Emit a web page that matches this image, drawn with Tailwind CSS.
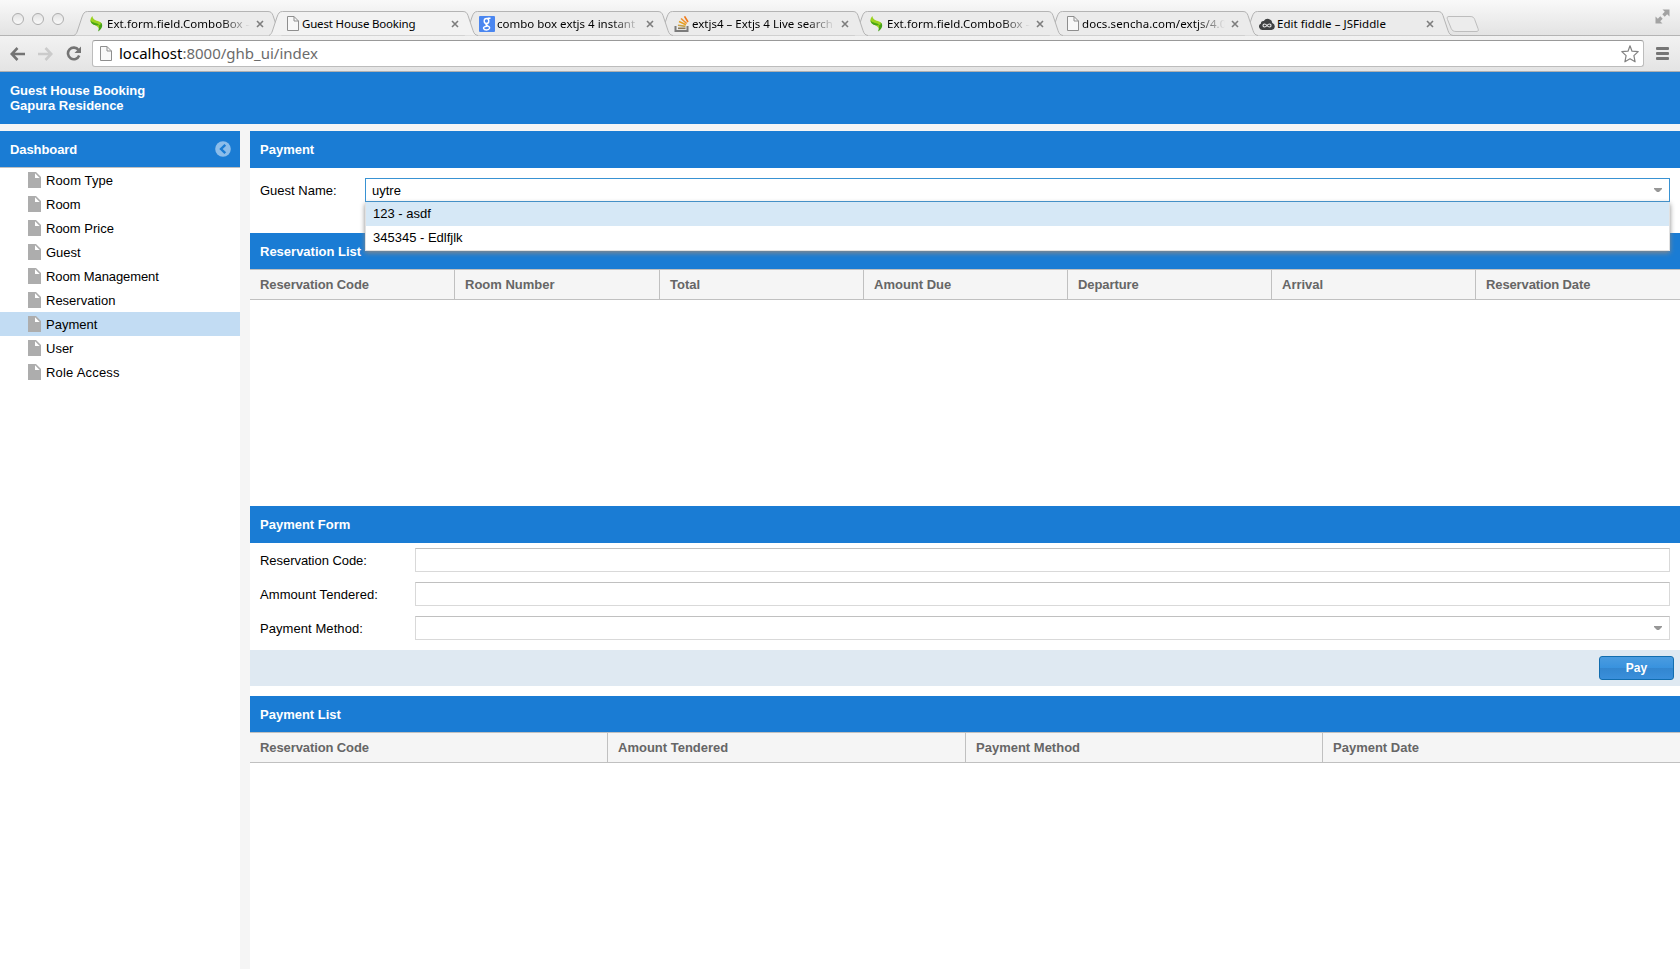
<!DOCTYPE html>
<html lang="en">
<head>
  <meta charset="UTF-8">
  <title>Guest House Booking</title>
  <script src="https://cdn.jsdelivr.net/npm/@tailwindcss/browser@4"></script>
</head>
<body class="h-screen overflow-hidden flex flex-col bg-[#f5f5f5] text-black font-['Liberation_Sans',Arial,sans-serif] text-[13px]">

  <!-- shared shapes -->
  <svg class="hidden">
    <symbol id="tab" viewBox="0 0 209 25">
      <path d="M0 24.5C2 23.5 2.6 22 3.4 20L8 6C9.3 2.5 10.3 .5 13.5 .5H194C197 .5 198 2 199 4.500L204 19.500C205 22.500 206 24 209 24.500" stroke="#b4b4b4"/>
    </symbol>
    <symbol id="doc" viewBox="0 0 12 15">
      <path d="M.5 .5H7L11.500 5V14.500H.5Z" fill="#f8f8f8" stroke="#8e8e8e"/>
      <path d="M7 .5V5H11.500" fill="none" stroke="#8e8e8e"/>
    </symbol>
    <symbol id="sencha" viewBox="0 0 16 16">
      <path d="M2.500 0C-.5 3 0 6.500 2.500 8C5.500 9.600 8 10 9 13C13.500 9 12 6.500 9 5.500C6 4.500 2.500 3.500 2.500 0Z" fill="#9bd31f"/>
      <path d="M.5 4C1.500 6.500 4 6.500 7 7.500C10 8.500 9.500 11 8 15.500C12.500 12.500 13.500 8.500 10.500 6.200C11.500 9.500 9 9.500 6 9.300C2.500 8.800 .5 7 .5 4Z" fill="#46a317"/>
    </symbol>
    <symbol id="x" viewBox="0 0 8 8">
      <path d="M1 1L7 7M7 1L1 7" stroke="#7d7d7d" stroke-width="1.600"/>
    </symbol>
    <symbol id="fiddle" viewBox="0 0 16 12">
      <path d="M3.500 12A3.400 3.400 0 0 1 2 5.500A2.200 2.200 0 0 1 4.800 3A4.600 4.600 0 0 1 13.300 5A3.600 3.600 0 0 1 12.500 12Z" fill="#3f4142"/>
      <path d="M8 7.500C6.500 5.500 4 5.500 4 7.500S6.500 9.500 8 7.500S12 5.500 12 7.500S9.500 9.500 8 7.500Z" fill="none" stroke="#eee" stroke-width="1.100"/>
    </symbol>
    <symbol id="leaf" viewBox="0 0 13 16">
      <path d="M0 0H8L13 5V16H0Z" fill="#adadad"/>
      <path d="M7 1.300V6H11.700Z" fill="#fff"/>
    </symbol>
    <symbol id="caret" viewBox="0 0 8 4">
      <path d="M0 0H8V1L5 4H3L0 1Z" fill="#979797"/>
    </symbol>
  </svg>

  <!-- tab strip -->
  <div class="relative h-9 shrink-0 flex items-end bg-linear-to-b from-[#f9f9f9] to-[#e3e3e3] border-b border-[#b4b4b4] font-['Noto_Sans',sans-serif] text-[11.5px]">
    <div class="w-[74px] h-full flex items-center gap-2 pl-3 pt-[3px]">
      <span class="size-3 rounded-full border border-[#adadad] bg-linear-to-b from-[#e3e3e3] to-[#fafafa]"></span>
      <span class="size-3 rounded-full border border-[#adadad] bg-linear-to-b from-[#e3e3e3] to-[#fafafa]"></span>
      <span class="size-3 rounded-full border border-[#adadad] bg-linear-to-b from-[#e3e3e3] to-[#fafafa]"></span>
    </div>
    <div class="relative z-10 w-[209px] h-[25px] -mr-[14px] -mb-px shrink-0">
      <svg class="absolute inset-0 w-[209px] h-[25px] fill-[#ebebeb]"><use href="#tab"/></svg>
      <div class="relative h-full flex items-center pl-4">
        <svg class="size-4 mr-px shrink-0"><use href="#sencha"/></svg>
        <span class="w-[143px] whitespace-nowrap mask-r-from-80% tracking-[0.05px]">Ext.form.field.ComboBox –</span>
        <svg class="size-2 ml-[6px] shrink-0"><use href="#x"/></svg>
      </div>
    </div>
    <div class="relative z-20 w-[209px] h-[25px] -mr-[14px] -mb-px shrink-0">
      <svg class="absolute inset-0 w-[209px] h-[25px] fill-[#f2f2f2]"><use href="#tab"/></svg>
      <div class="relative h-full flex items-center pl-[18px]">
        <svg class="w-[12px] h-[15px] mr-[3px] shrink-0"><use href="#doc"/></svg>
        <span class="w-[143px] whitespace-nowrap tracking-[-0.18px]">Guest House Booking</span>
        <svg class="size-2 ml-[6px] shrink-0"><use href="#x"/></svg>
      </div>
    </div>
    <div class="relative z-9 w-[209px] h-[25px] -mr-[14px] -mb-px shrink-0">
      <svg class="absolute inset-0 w-[209px] h-[25px] fill-[#ebebeb]"><use href="#tab"/></svg>
      <div class="relative h-full flex items-center pl-[15px]">
        <svg class="size-4 mr-[2px] shrink-0" viewBox="0 0 16 16">
          <rect width="16" height="16" rx="1" fill="#4a86f0"/>
          <g fill="none" stroke="#fff" stroke-width="1.400">
            <ellipse cx="7.500" cy="5" rx="2.300" ry="2.500"/>
            <path d="M8.500 2.200H11.500M8.500 7.500C6 8.300 7 9 8.800 9.800C11.800 11 10.800 14 7.500 14S3.600 11.300 6 10.600S8 10 9 10"/>
          </g>
        </svg>
        <span class="w-[143px] whitespace-nowrap mask-r-from-80%">combo box extjs 4 instant</span>
        <svg class="size-2 ml-[6px] shrink-0"><use href="#x"/></svg>
      </div>
    </div>
    <div class="relative z-8 w-[209px] h-[25px] -mr-[14px] -mb-px shrink-0">
      <svg class="absolute inset-0 w-[209px] h-[25px] fill-[#ebebeb]"><use href="#tab"/></svg>
      <div class="relative h-full flex items-center pl-[15px]">
        <svg class="size-4 mr-[2px] shrink-0" viewBox="0 0 16 16" fill="none">
          <path d="M1.500 10V15H13.500V10" stroke="#7b7b7b" stroke-width="2"/>
          <path d="M4 12.300H11.500" stroke="#8a7a5a" stroke-width="1.600"/>
          <path d="M4 9.200L11.500 10.400" stroke="#c8a24b" stroke-width="1.600"/>
          <path d="M5 5.500L12 8.800" stroke="#e8a020" stroke-width="1.600"/>
          <path d="M7 2.500L12.700 7.500" stroke="#f0902a" stroke-width="1.600"/>
          <path d="M10.500 .3L14 6" stroke="#f07a1a" stroke-width="1.600"/>
        </svg>
        <span class="w-[143px] whitespace-nowrap mask-r-from-80%">extjs4 – Extjs 4 Live search</span>
        <svg class="size-2 ml-[6px] shrink-0"><use href="#x"/></svg>
      </div>
    </div>
    <div class="relative z-7 w-[209px] h-[25px] -mr-[14px] -mb-px shrink-0">
      <svg class="absolute inset-0 w-[209px] h-[25px] fill-[#ebebeb]"><use href="#tab"/></svg>
      <div class="relative h-full flex items-center pl-4">
        <svg class="size-4 mr-px shrink-0"><use href="#sencha"/></svg>
        <span class="w-[143px] whitespace-nowrap mask-r-from-80% tracking-[0.05px]">Ext.form.field.ComboBox –</span>
        <svg class="size-2 ml-[6px] shrink-0"><use href="#x"/></svg>
      </div>
    </div>
    <div class="relative z-6 w-[209px] h-[25px] -mr-[14px] -mb-px shrink-0">
      <svg class="absolute inset-0 w-[209px] h-[25px] fill-[#ebebeb]"><use href="#tab"/></svg>
      <div class="relative h-full flex items-center pl-[18px]">
        <svg class="w-[12px] h-[15px] mr-[3px] shrink-0"><use href="#doc"/></svg>
        <span class="w-[143px] whitespace-nowrap mask-r-from-80% tracking-[0.08px]">docs.sencha.com/extjs/4.0</span>
        <svg class="size-2 ml-[6px] shrink-0"><use href="#x"/></svg>
      </div>
    </div>
    <div class="relative z-5 w-[209px] h-[25px] -mr-[14px] -mb-px shrink-0">
      <svg class="absolute inset-0 w-[209px] h-[25px] fill-[#ebebeb]"><use href="#tab"/></svg>
      <div class="relative h-full flex items-center pl-[15px]">
        <svg class="w-4 h-3 mr-[2px] shrink-0"><use href="#fiddle"/></svg>
        <span class="w-[143px] whitespace-nowrap tracking-[0.05px]">Edit fiddle – JSFiddle</span>
        <svg class="size-2 ml-[6px] shrink-0"><use href="#x"/></svg>
      </div>
    </div>
    <svg class="w-[34px] h-[17px] ml-[7px] mb-[2px] shrink-0" viewBox="0 0 34 17">
      <path d="M3 .5H24C27 .5 28 1.500 28.700 3.500L32 12.500C32.700 14.500 32.500 15.500 30 15.500H10C7.500 15.500 6 14.500 5.200 12.500L1.500 3.500C.8 1.500 1 .5 3 .5Z" fill="#ececec" stroke="#bdbdbd"/>
    </svg>
    <svg class="size-[15px] ml-auto mr-[10px] mb-[11px] shrink-0" viewBox="0 0 15 15" fill="#a3a3a3">
      <path d="M7.500 .5H14.500V7.500L12.200 5.200L9.700 7.700L7.300 5.300L9.800 2.800Z"/>
      <path d="M.5 7.500L2.800 9.800L5.300 7.300L7.700 9.700L5.200 12.200L7.500 14.500H.5Z"/>
    </svg>
  </div>

  <!-- toolbar -->
  <div class="h-9 shrink-0 flex items-center bg-linear-to-b from-[#f2f2f2] to-[#e4e4e4] border-b border-[#b0b0b0] pl-[10px] pr-[11px]">
    <svg class="w-[15px] h-[14px] shrink-0" viewBox="0 0 15 14" fill="none" stroke="#747474" stroke-width="2.600">
      <path d="M15 7H2M7.500 1L1.700 7L7.500 13"/>
    </svg>
    <svg class="w-[15px] h-[14px] ml-[13px] shrink-0" viewBox="0 0 15 14" fill="none" stroke="#cbcbcb" stroke-width="2.600">
      <path d="M0 7H13M7.500 1L13.300 7L7.500 13"/>
    </svg>
    <svg class="size-[15px] ml-[13px] shrink-0" viewBox="0 0 15 15">
      <path d="M12.500 4A5.800 5.800 0 1 0 13.200 9.500" fill="none" stroke="#747474" stroke-width="2.600"/>
      <path d="M15 .5V7H8.500Z" fill="#747474"/>
    </svg>
    <div class="w-[1552px] h-[27px] ml-[11px] flex items-center rounded-[3px] bg-white border border-[#bcbcbc] border-t-[#999] pl-[7px] pr-1">
      <svg class="w-[12px] h-[15px] shrink-0"><use href="#doc"/></svg>
      <span class="ml-[7px] pb-[2px] font-['Noto_Sans',sans-serif] text-[15px] leading-5 text-[#6b6b6b]"><span class="text-black">localhost</span>:8000/ghb_ui/index</span>
      <svg class="size-[18px] ml-auto" viewBox="0 0 18 18">
        <path d="M9 .8L11 6.200L17.200 6.600L12.900 10.600L14.100 16.800L9 13.800L3.900 16.800L5.100 10.600L.8 6.600L7 6.200Z" fill="#fff" stroke="#828282" stroke-width="1.200" stroke-linejoin="round"/>
      </svg>
    </div>
    <div class="ml-auto w-[13px] flex flex-col gap-[2px]">
      <span class="h-[3px] rounded-[1px] bg-[#757575]"></span>
      <span class="h-[3px] rounded-[1px] bg-[#757575]"></span>
      <span class="h-[3px] rounded-[1px] bg-[#757575]"></span>
    </div>
  </div>

  <!-- app header -->
  <header class="h-[52px] shrink-0 bg-[#1a7cd4] text-white font-bold leading-[15px] px-[10px] pt-[11px] tracking-[-0.04px]">
    <div>Guest House Booking</div>
    <div>Gapura Residence</div>
  </header>

  <div class="flex-1 min-h-0 flex gap-[10px] pt-[7px]">

    <!-- sidebar -->
    <aside class="w-60 shrink-0 bg-white">
      <div class="h-[37px] flex items-center justify-between bg-[#1a7cd4] border-b border-[#c0c0c0] text-white font-bold pl-[10px] pr-[9px]">
        <span class="pt-px tracking-[-0.08px]">Dashboard</span>
        <svg class="size-4" viewBox="0 0 16 16">
          <circle cx="8" cy="8" r="7.800" fill="#8cbdea"/>
          <path d="M10.300 3.800L6 8L10.300 12.200" fill="none" stroke="#1a7cd4" stroke-width="2.400"/>
        </svg>
      </div>
      <ul class="leading-[25px]">
        <li class="h-6 flex items-center gap-[5px] pl-7"><svg class="w-[13px] h-4"><use href="#leaf"/></svg><span class="h-6 tracking-[0.1px]">Room Type</span></li>
        <li class="h-6 flex items-center gap-[5px] pl-7"><svg class="w-[13px] h-4"><use href="#leaf"/></svg><span class="h-6">Room</span></li>
        <li class="h-6 flex items-center gap-[5px] pl-7"><svg class="w-[13px] h-4"><use href="#leaf"/></svg><span class="h-6">Room Price</span></li>
        <li class="h-6 flex items-center gap-[5px] pl-7"><svg class="w-[13px] h-4"><use href="#leaf"/></svg><span class="h-6">Guest</span></li>
        <li class="h-6 flex items-center gap-[5px] pl-7"><svg class="w-[13px] h-4"><use href="#leaf"/></svg><span class="h-6 tracking-[-0.1px]">Room Management</span></li>
        <li class="h-6 flex items-center gap-[5px] pl-7"><svg class="w-[13px] h-4"><use href="#leaf"/></svg><span class="h-6">Reservation</span></li>
        <li class="h-6 flex items-center gap-[5px] pl-7 bg-[#c2dcf3]"><svg class="w-[13px] h-4"><use href="#leaf"/></svg><span class="h-6">Payment</span></li>
        <li class="h-6 flex items-center gap-[5px] pl-7"><svg class="w-[13px] h-4"><use href="#leaf"/></svg><span class="h-6">User</span></li>
        <li class="h-6 flex items-center gap-[5px] pl-7"><svg class="w-[13px] h-4"><use href="#leaf"/></svg><span class="h-6 tracking-[0.2px]">Role Access</span></li>
      </ul>
    </aside>

    <!-- content -->
    <main class="flex-1 min-w-0 flex flex-col bg-white">
      <h2 class="h-[37px] shrink-0 flex items-center bg-[#1a7cd4] text-white font-bold px-[10px]">Payment</h2>
      <div class="h-[65px] shrink-0 flex items-start px-[10px] pt-[10px]">
        <label class="w-[105px] leading-[25px]">Guest Name:</label>
        <div class="relative flex-1">
          <div class="h-6 flex items-center justify-between border border-[#3892d3] bg-white pl-[6px] pr-[7px]">
            <span class="pt-px">uytre</span>
            <svg class="w-2 h-1"><use href="#caret"/></svg>
          </div>
          <ul class="absolute left-0 right-0 top-6 z-10 bg-white border-x border-b border-[#e1e1e1] leading-6 shadow-[0_2px_5px_#888]">
            <li class="h-6 px-[7px] bg-[#d6e8f6]">123 - asdf</li>
            <li class="h-6 px-[7px]">345345 - Edlfjlk</li>
          </ul>
        </div>
      </div>

      <h2 class="h-9 shrink-0 flex items-center bg-[#1a7cd4] text-white font-bold px-[10px] pt-px">Reservation List</h2>
      <div class="h-[31px] shrink-0 grid grid-cols-[205px_205px_204px_204px_204px_204px_1fr] items-stretch bg-[#f5f5f5] border-y border-[#c0c0c0] text-[#666] font-bold leading-[29px]">
        <div class="px-[10px] border-r border-[#c0c0c0] tracking-[-0.1px]">Reservation Code</div>
        <div class="px-[10px] border-r border-[#c0c0c0]">Room Number</div>
        <div class="px-[10px] border-r border-[#c0c0c0]">Total</div>
        <div class="px-[10px] border-r border-[#c0c0c0]">Amount Due</div>
        <div class="px-[10px] border-r border-[#c0c0c0] tracking-[-0.08px]">Departure</div>
        <div class="px-[10px] border-r border-[#c0c0c0]">Arrival</div>
        <div class="px-[10px] tracking-[-0.12px]">Reservation Date</div>
      </div>
      <div class="h-[206px] shrink-0"></div>

      <h2 class="h-[37px] shrink-0 flex items-center bg-[#1a7cd4] text-white font-bold px-[10px]">Payment Form</h2>
      <form class="shrink-0 flex flex-col gap-[10px] px-[10px] pt-[5px] pb-[10px]">
        <div class="h-6 flex leading-[25px]">
          <label class="w-[155px] tracking-[-0.05px]">Reservation Code:</label>
          <div class="flex-1 border border-[#d9d9d9] border-t-[#c0c0c0]"></div>
        </div>
        <div class="h-6 flex leading-[25px]">
          <label class="w-[155px] tracking-[0.07px]">Ammount Tendered:</label>
          <div class="flex-1 border border-[#d9d9d9] border-t-[#c0c0c0]"></div>
        </div>
        <div class="h-6 flex leading-[25px]">
          <label class="w-[155px] tracking-[0.07px]">Payment Method:</label>
          <div class="flex-1 flex items-center justify-end border border-[#d9d9d9] border-t-[#c0c0c0] pr-[7px]">
            <svg class="w-2 h-1"><use href="#caret"/></svg>
          </div>
        </div>
      </form>
      <div class="h-9 shrink-0 flex items-center justify-end bg-[#dfe9f2] pr-[6px]">
        <button class="w-[75px] h-6 rounded-[3px] border border-[#126daf] bg-[linear-gradient(#4b9ce0,#3892de_50%,#3386cf_51%,#3a8fdb)] text-white font-bold text-[12px] leading-[22px]">Pay</button>
      </div>

      <h2 class="h-9 shrink-0 mt-[10px] flex items-center bg-[#1a7cd4] text-white font-bold px-[10px] pt-px">Payment List</h2>
      <div class="h-[31px] shrink-0 grid grid-cols-[358px_358px_357px_1fr] items-stretch bg-[#f5f5f5] border-y border-[#c0c0c0] text-[#666] font-bold leading-[29px]">
        <div class="px-[10px] border-r border-[#c0c0c0] tracking-[-0.1px]">Reservation Code</div>
        <div class="px-[10px] border-r border-[#c0c0c0]">Amount Tendered</div>
        <div class="px-[10px] border-r border-[#c0c0c0]">Payment Method</div>
        <div class="px-[10px]">Payment Date</div>
      </div>
    </main>
  </div>
</body>
</html>
